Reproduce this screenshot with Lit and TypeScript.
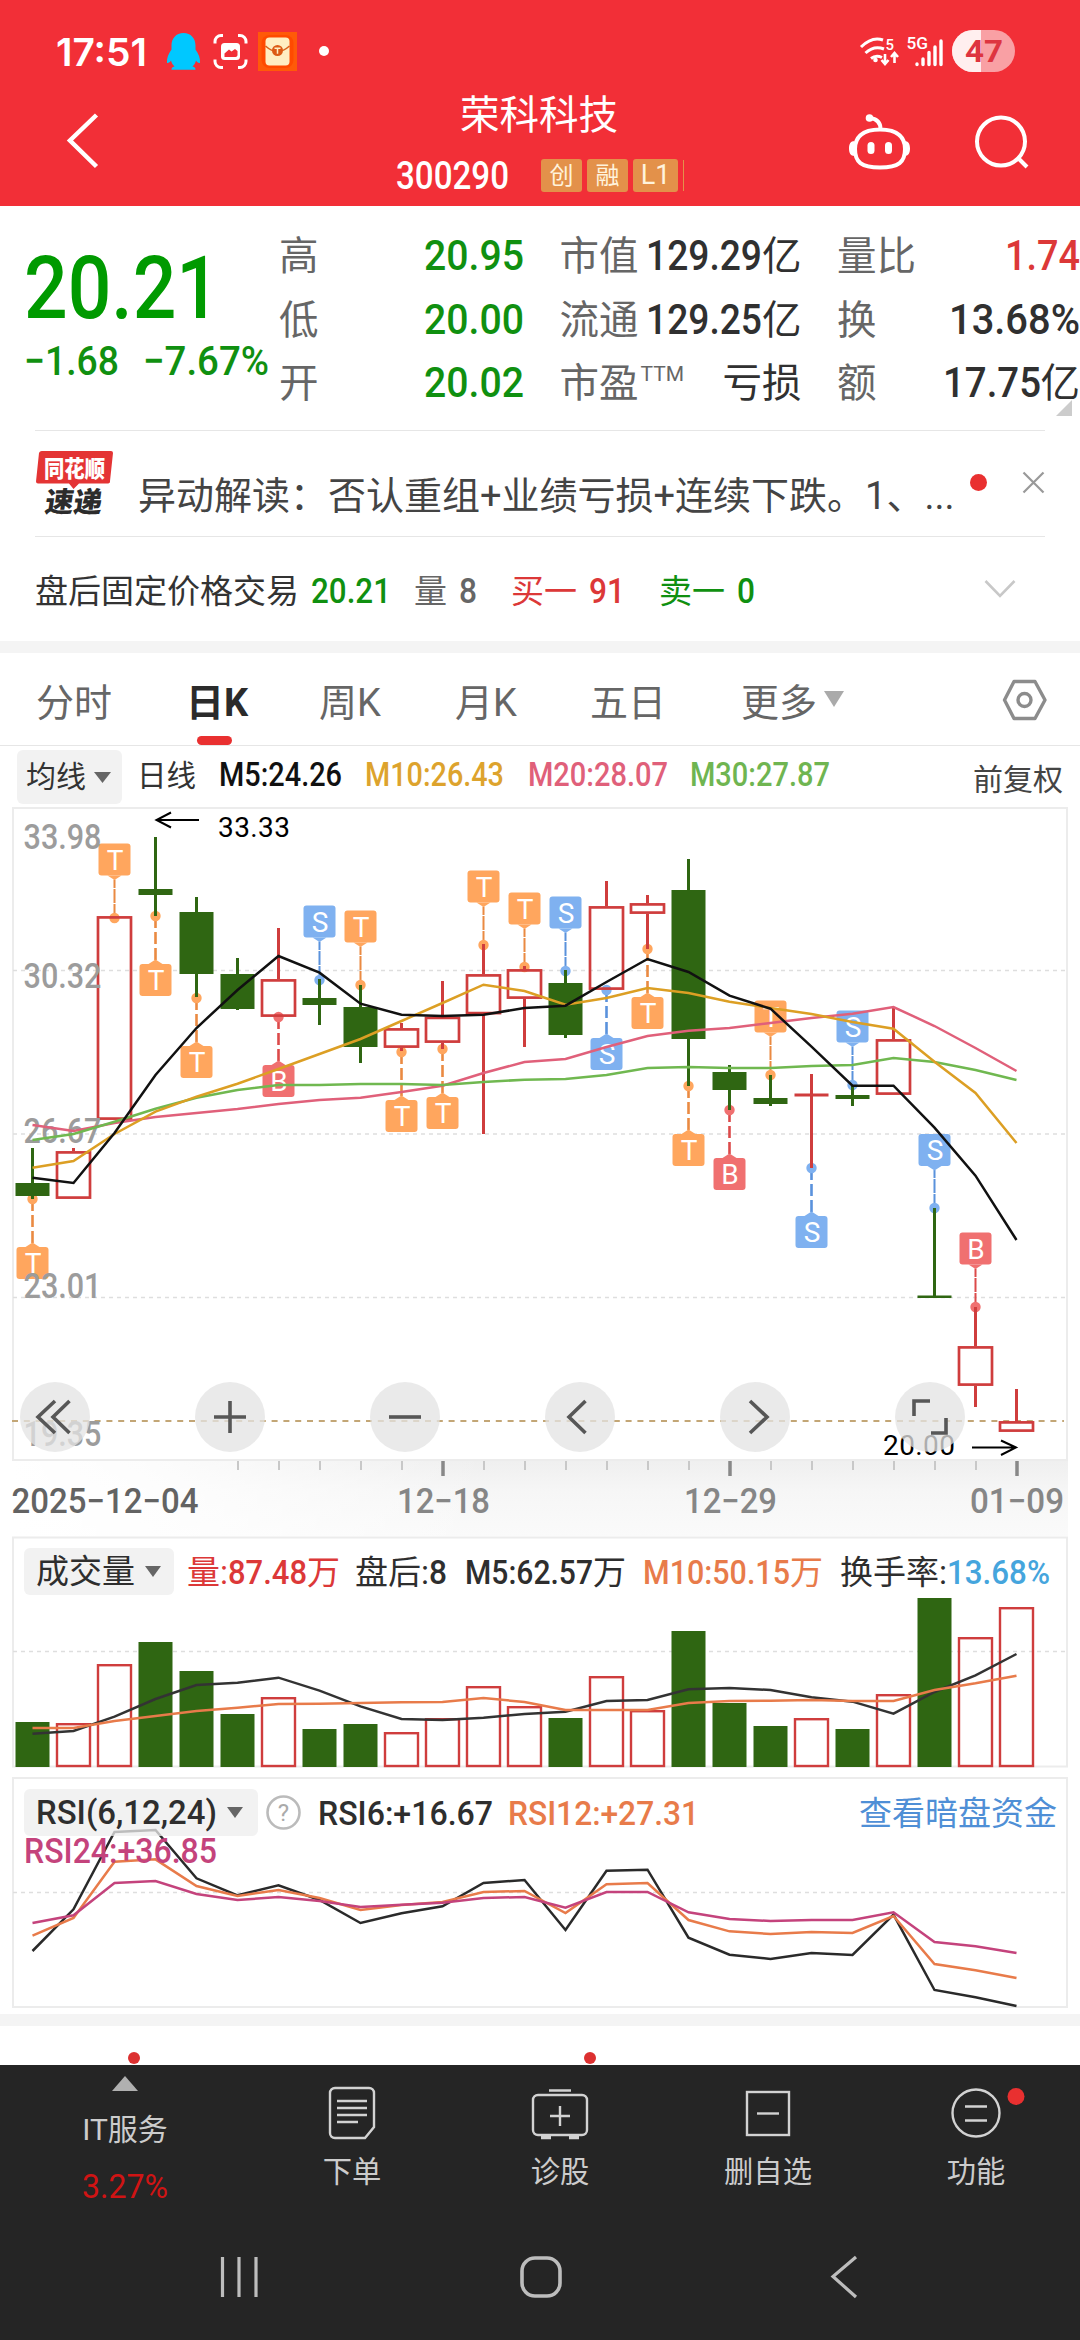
import { LitElement, html, svg, css } from "lit";
import { customElement, property } from "lit/decorators.js";

const fit = (text: string, width: number, cls = "") => html`<svg
  class="fit ${cls}" width=${width}><text x="0" y="0.72em" textLength=${width} lengthAdjust="spacingAndGlyphs">${text}</text></svg>`;

const GREEN = "#2f6612";
const RED = "#cf3d3d";
const STEP = 41;
const X0 = 32.5;
const cx = (i: number) => X0 + STEP * i;
const points = (ys: number[]) => ys.map((y, i) => `${cx(i)},${y}`).join(" ");

// direction, high, body top, body bottom, low
type Candle = ["u" | "d", number, number, number, number];
const candles: Candle[] = [
  ["d", 1148, 1183, 1196, 1199], ["u", 1148, 1151, 1199, 1199], ["u", 916, 916, 1120, 1120],
  ["d", 837, 889, 895, 916], ["d", 897, 912, 974, 997], ["d", 958, 974, 1009, 1010],
  ["u", 928, 979, 1017, 1017], ["d", 979, 998, 1005, 1025], ["d", 985, 1007, 1047, 1063],
  ["u", 1023, 1028, 1048, 1051], ["u", 981, 1016.5, 1043, 1049], ["u", 944, 974, 1014.5, 1134],
  ["u", 966, 969, 999, 1047], ["d", 970, 983, 1035, 1038], ["u", 881, 906, 990, 990],
  ["u", 895, 903, 914, 949], ["d", 859, 890, 1039, 1086], ["d", 1065, 1072, 1090, 1110],
  ["d", 1075, 1098, 1104, 1106], ["u", 1074, 1093.5, 1096.5, 1168], ["d", 1085, 1095, 1099, 1106],
  ["u", 1007, 1039, 1095, 1095], ["d", 1208, 1295.5, 1298, 1298], ["u", 1307, 1346, 1386, 1407],
  ["u", 1389, 1421, 1432, 1432],
];

// index, letter, box top, dot y
type Mark = [number, "T" | "S" | "B", number, number];
const marks: Mark[] = [
  [0, "T", 1247, 1199], [2, "T", 843.5, 918], [3, "T", 964, 916], [4, "T", 1046, 998], [6, "B", 1065, 1017],
  [7, "S", 905.5, 980], [8, "T", 910.5, 985], [9, "T", 1100, 1052], [10, "T", 1097, 1049],
  [11, "T", 870.5, 945], [12, "T", 892.5, 967], [13, "S", 896.5, 971], [14, "S", 1038, 990],
  [15, "T", 997, 949], [16, "T", 1134, 1086], [17, "B", 1158, 1110], [18, "T", 1000.5, 1075],
  [19, "S", 1216, 1168], [20, "S", 1010.5, 1085], [22, "S", 1134, 1208], [23, "B", 1232.5, 1307],
];
const markFill = { T: "#ffa65e", S: "#7fb1f0", B: "#f07070" };
const markLine = { T: "#ea8a42", S: "#5a92dc", B: "#dc4a4a" };

const averages: [string, number[]][] = [
  ["#e0607a", [1125, 1131, 1123, 1117, 1113, 1109, 1104, 1100, 1097.7, 1092, 1085.7, 1073, 1062, 1059, 1047, 1036, 1030.7, 1028, 1023, 1018, 1013.7, 1007, 1026, 1048, 1071]],
  ["#70b850", [1140, 1134, 1121.7, 1108.7, 1097.7, 1090, 1085, 1085, 1084, 1084, 1085, 1082, 1079.7, 1079, 1075, 1068, 1067, 1068, 1068, 1066, 1065, 1058, 1062, 1070, 1080]],
  ["#dc9f24", [1167.7, 1161, 1134, 1111.7, 1096.7, 1083.7, 1069, 1054, 1039, 1021, 1003, 984.7, 991, 1004.7, 998, 988, 993, 1001.7, 1008, 1014, 1022, 1028.7, 1061.7, 1093, 1143]],
  ["#111", [1177.7, 1183, 1133, 1075, 1028, 990, 956, 972.7, 1003.7, 1014.7, 1016, 1014.7, 1008, 1005.7, 982, 959, 972, 995.7, 1008.7, 1046.7, 1085.7, 1085.7, 1127.7, 1175.7, 1240]],
];

const priceLabels: [string, number][] = [["33.98", 849], ["30.32", 988], ["26.67", 1143], ["23.01", 1298], ["19.35", 1445.5]];

@customElement("kline-chart")
class KlineChart extends LitElement {
  static styles = css`
    :host { display: block; }
    svg { display: block; font-family: Roboto, "Noto Sans CJK SC", sans-serif; }
    .letter { font-size: 28px; fill: #fff; text-anchor: middle; }
    .axis { font-size: 35px; font-weight: 500; fill: #9c9c9c; }
    .ext { font-size: 28px; fill: #000; }
    .date { font-size: 35px; font-weight: 500; fill: #868686; }
    .date.first { fill: #636363; }
  `;

  private mark([i, letter, top, dot]: Mark) {
    const x = cx(i);
    const above = top < dot;
    const edge = above ? top + 36 : top - 4;
    const tri = above
      ? `${x - 7},${top + 32} ${x + 7},${top + 32} ${x},${top + 36.5}`
      : `${x - 7},${top} ${x + 7},${top} ${x},${top - 4.5}`;
    return svg`
      <line x1=${x} x2=${x} y1=${dot} y2=${edge} stroke=${markLine[letter]} stroke-width=${above ? 2 : 2.6}
        stroke-dasharray=${above ? "14 1" : "12 4"}/>
      <circle cx=${x} cy=${dot} r="5.2" fill=${markFill[letter]}/>
      <rect x=${x - 16} y=${top} width="32" height="32" rx="3" fill=${markFill[letter]}/>
      <polygon points=${tri} fill=${markFill[letter]}/>
      <text class="letter" x=${x + 0.5} y=${top + 26}>${letter}</text>`;
  }

  private candle([dir, hi, top, bot, lo]: Candle, i: number) {
    const x = cx(i);
    const h = bot - top;
    if (dir === "d" || h < 4) {
      const c = dir === "d" ? GREEN : RED;
      return svg`<line x1=${x} x2=${x} y1=${hi} y2=${lo} stroke=${c} stroke-width="3"/>
        <rect x=${x - 17} y=${top} width="34" height=${h} fill=${c}/>`;
    }
    return svg`<path d="M${x} ${hi}V${top}M${x} ${bot}V${lo}" stroke=${RED} stroke-width="3"/>
      <rect x=${x - 16.5} y=${top + 1.4} width="33" height=${h - 2.8} fill="none" stroke=${RED} stroke-width="2.7"/>`;
  }

  private tool(x: number, d: string) {
    return svg`<circle cx=${x} cy="1417" r="35" fill="rgb(228,228,228)" fill-opacity="0.76"/>
      <path d=${d} transform="translate(${x} 1417)" fill="none" stroke="#575757" stroke-width="3.6"/>`;
  }

  render() {
    return html`<svg width="1080" height="730" viewBox="0 806 1080 730">
      <defs>
        <linearGradient id="v" x1="0" y1="0" x2="0" y2="1">
          <stop offset="0" stop-color="#efefef"/><stop offset=".4" stop-color="#f6f6f6"/><stop offset="1" stop-color="#fafafa"/>
        </linearGradient>
        <linearGradient id="h" x1="0" y1="0" x2="1" y2="0">
          <stop offset="0" stop-color="#fff"/><stop offset=".12" stop-color="#fff" stop-opacity=".85"/>
          <stop offset=".45" stop-color="#fff" stop-opacity="0"/>
        </linearGradient>
      </defs>
      <rect x="12" y="1461" width="1056" height="75" fill="url(#v)"/>
      <rect x="12" y="1461" width="1056" height="75" fill="url(#h)"/>
      <rect x="13" y="808" width="1054" height="652" fill="#fff" stroke="#ececec" stroke-width="2"/>
      <path d="M13 970.5H1066M13 1134H1066M13 1297.5H1066" stroke="#dedede" stroke-width="1.4" stroke-dasharray="4 4"/>
      <path d="M12 1421H1064" stroke="#c3a676" stroke-width="1.8" stroke-dasharray="6 5.8"/>
      ${marks.map((m) => this.mark(m))}
      ${candles.map((c, i) => this.candle(c, i))}
      ${priceLabels.map(([t, y]) => svg`<text class="axis" x="23.5" y=${y} textLength="78" lengthAdjust="spacingAndGlyphs">${t}</text>`)}
      ${averages.map(([c, ys]) => svg`<polyline points=${points(ys)} fill="none" stroke=${c} stroke-width="2.5"/>`)}
      <path d="M199 820H157M171 812.5L156.500 820L171 827.500" fill="none" stroke="#000" stroke-width="2"/>
      <text class="ext" x="218" y="837" textLength="72">33.33</text>
      <path d="M972 1447.500H1015M1001 1440.500L1016 1447.500L1001 1455" fill="none" stroke="#000" stroke-width="2"/>
      <text class="ext" x="883" y="1455" textLength="72">20.00</text>
      ${this.tool(55, "M0 -16L-17 0L0 16M14.500 -16L-2 0L14.500 16")}
      ${this.tool(230, "M-16 0H16M0 -16V16")}
      ${this.tool(405, "M-16 0H16")}
      ${this.tool(580, "M5.500 -16L-11 0L5.500 16")}
      ${this.tool(755, "M-5 -16L12 0L-5 16")}
      ${this.tool(930, "M0 -16H-16V-1M1 16H16V1")}
      ${Array.from({ length: 20 }, (_, k) => k + 5).map((i) => {
        const major = i === 10 || i === 17 || i === 24;
        return svg`<line x1=${cx(i) + 0.5} x2=${cx(i) + 0.5} y1="1461" y2=${major ? 1476 : 1470}
          stroke=${major ? "#888" : "#c8c8c8"} stroke-width=${major ? 3.5 : 2}/>`;
      })}
      <text class="date first" x="11.500" y="1513" textLength="187" lengthAdjust="spacingAndGlyphs">2025−12−04</text>
      <text class="date" x="397" y="1513" textLength="93" lengthAdjust="spacingAndGlyphs">12−18</text>
      <text class="date" x="684" y="1513" textLength="93" lengthAdjust="spacingAndGlyphs">12−29</text>
      <text class="date" x="970" y="1513" textLength="94" lengthAdjust="spacingAndGlyphs">01−09</text>
    </svg>`;
  }
}

const volDirs = "duudddudduuuuduudddududuu";
const volTops = [1722, 1723, 1664, 1642, 1671, 1714, 1697, 1729, 1724, 1732, 1718, 1686, 1706, 1718, 1676, 1710, 1631, 1703, 1726, 1718, 1729, 1694, 1598, 1637, 1607];
const scaled = (base: number, ys: number[]) => ys.map((y) => base + y / 3);
const volM5 = scaled(1530, [611, 603, 560, 507, 465, 458, 443, 482, 529, 567, 570, 563, 552, 545, 513, 510, 478, 474, 480, 502, 515, 551, 486, 436, 372]);
const volM10 = scaled(1530, [594, 594, 573, 558, 543, 533, 522, 521, 519, 517, 516, 504, 516, 540, 540, 540, 519, 513, 512, 510, 513, 513, 480, 460, 437]);
const rsi6 = scaled(1770, [543, 418, 186, 180, 325, 376, 346, 390, 459, 430, 409, 339, 330, 480, 302, 299, 503, 554, 567, 549, 555, 434, 660, 682, 708]);
const rsi12 = scaled(1770, [497, 444, 275, 268, 348, 378, 360, 384, 420, 405, 396, 366, 363, 429, 343, 339, 450, 484, 492, 486, 489, 438, 582, 601, 624]);
const rsi24 = scaled(1770, [459, 436, 339, 333, 372, 390, 381, 393, 411, 404, 398, 384, 381, 413, 366, 366, 427, 447, 453, 450, 450, 427, 516, 529, 549]);

const poly = (ys: number[], color: string) => svg`<polyline points=${points(ys)} fill="none" stroke=${color} stroke-width="2.5"/>`;

@customElement("sub-chart")
class SubChart extends LitElement {
  @property() kind = "volume";
  static styles = css`:host { display: block; } svg { display: block; }`;

  render() {
    if (this.kind === "rsi")
      return html`<svg width="1080" height="238" viewBox="0 1770 1080 238">
        <rect x="13" y="1778" width="1054" height="229" fill="none" stroke="#ececec" stroke-width="2"/>
        <path d="M13 1892.500H1066" stroke="#dedede" stroke-width="1.4" stroke-dasharray="4 4"/>
        ${poly(rsi6, "#2a2a2a")}${poly(rsi12, "#e87b4a")}${poly(rsi24, "#c4437c")}
      </svg>`;
    return html`<svg width="1080" height="234" viewBox="0 1536 1080 234">
      <rect x="13" y="1537.500" width="1054" height="229" fill="#fff" stroke="#ececec" stroke-width="2"/>
      <path d="M13 1651.500H1066" stroke="#dedede" stroke-width="1.4" stroke-dasharray="4 4"/>
      ${volTops.map((y, i) => volDirs[i] === "d"
        ? svg`<rect x=${cx(i) - 17} y=${y} width="34" height=${1767 - y} fill=${GREEN}/>`
        : svg`<rect x=${cx(i) - 16.5} y=${y + 1.2} width="33" height=${1766 - y - 1.2} fill="none" stroke=${RED} stroke-width="2.4"/>`)}
      ${poly(volM5, "#333")}${poly(volM10, "#e87b4a")}
    </svg>`;
  }
}

const icon = {
  order: svg`<path d="M7 2H41a5 5 0 0 1 5 5V41L37 52H7a5 5 0 0 1-5-5V7a5 5 0 0 1 5-5Z"/><path d="M9 15H39M9 22H39M9 29H39M9 36H30"/>`,
  diagnose: svg`<rect x="-3" y="9" width="54" height="40" rx="5"/><path d="M13 4.500H35M24 20V40M14 30H34"/><path d="M5 51.500H15M33 51.500H43" stroke-width="3.500"/>`,
  remove: svg`<rect x="3" y="6" width="42" height="43"/><path d="M13 27.500H35"/>`,
  more: svg`<circle cx="24" cy="27" r="23.500"/><path d="M13 20.500H35M13 34.500H35"/>`,
};

@customElement("app-root")
class AppRoot extends LitElement {
  static styles = css`
    :host { display: block; width: 1080px; height: 2340px; overflow: hidden; background: #fff; color: #333;
      font-family: Roboto, "Noto Sans CJK SC", sans-serif; white-space: nowrap; }
    * { box-sizing: border-box; }
    svg { display: block; flex: none; overflow: visible; }
    .fit { display: inline-block; height: .72em; vertical-align: baseline; fill: currentColor; font-weight: 500; }
    .reg { font-weight: 400; }
    .red { color: #dc3838; }
    .green { color: #109010; }
    .gray { color: #666; }

    header { height: 206px; background: #f22f37; color: #fff; }
    .status { height: 92px; padding: 11px 65px 0 56px; display: flex; justify-content: space-between; }
    .clock { display: flex; align-items: center; height: 82px; gap: 19px; }
    .time { font: 600 38px/80px Inter, sans-serif; }
    .time .fit { font-weight: 600; }
    .nav { display: grid; grid-template-columns: 397px 1fr 271px; height: 114px; }
    .title { font-size: 39.5px; line-height: 48px; padding-left: 63px; }
    .code { display: flex; align-items: center; height: 36px; margin: 17px 0 0 -1px; padding-top: 1px; font-size: 38px; }
    .code .fit { margin-right: 32px; }
    .tag { height: 33px; width: 41px; border-radius: 3px; background: #e3914a; color: #fff3dc; font-size: 24px;
      line-height: 34px; text-align: center; margin-right: 5px; }
    .tag.wide { width: 45px; font-size: 27px; line-height: 33px; }
    .sliver { width: 1px; height: 31px; background: #e3914a; }

    .quote { display: flex; height: 224px; padding-top: 19px; }
    .last { width: 279px; padding-left: 24px; padding-top: 30px; color: #009a00; }
    .last .price { font-size: 87.5px; display: block; }
    .delta { display: flex; gap: 24px; margin-top: 27px; font-size: 41px; color: #109010; }
    .stats { display: grid; grid-template-columns: 245px 242px 243px; column-gap: 35.5px; grid-auto-rows: 63.5px; }
    .stat { display: flex; justify-content: space-between; align-items: baseline; line-height: 63px; font-size: 39.5px; color: #303030; }
    .stat .fit { font-size: 43px; }
    .stat.green { color: #109010; }
    .stat.red { color: #dc3838; }
    .label { color: #666; }
    .label sup { font-size: 21px; line-height: 0; vertical-align: 16px; margin-left: 2px; }
    .corner { position: absolute; left: 1056px; top: 400px; }

    .divider { height: 1px; margin: 0 35px; background: #e6e6e6; }
    .news { height: 105px; display: grid; grid-template-columns: 102px 832px 52px 1fr; padding-left: 36px; color: #444; }
    .brand { font-weight: 900; }
    .brand text { font-family: "Noto Sans CJK SC", sans-serif; font-weight: 900; }
    .headline { font-size: 38px; line-height: 131px; height: 105px; overflow: hidden; text-overflow: ellipsis; }
    .after { height: 104px; display: flex; align-items: baseline; line-height: 110px; padding-left: 35px; font-size: 33px; }
    .after .fit { font-size: 35px; }
    .gap1 { margin-left: 12px; } .gap2 { margin-left: 23px; } .gap3 { margin-left: 34px; }
    .expand { margin-left: 229px; align-self: center; }
    .band { height: 12px; background: #f4f4f4; }

    .tabs { height: 93px; display: grid; grid-template-columns: 150px 133px 136px 135px 151px 262px 1fr; padding-left: 36px;
      font-size: 38px; line-height: 101px; color: #666; border-bottom: 1px solid #e6e6e6; }
    .tab { display: flex; }
    .tab.on { color: #2b2b2b; font-weight: 700; display: block; }
    .bar { width: 35px; height: 9px; border-radius: 5px; background: #e93030; margin: -18px 0 0 11px; }

    .mas { height: 60px; padding: 4px 0 0 17px; display: grid; grid-template-columns: 120px 82px 146px 163px 162px 283px 1fr;
      font-size: 29.5px; line-height: 52px; align-items: start; }
    .mas .fit { font-size: 32.5px; }
    .pill { background: #f2f2f2; border-radius: 6px; display: flex; align-items: center; }
    .mas .pill { width: 105px; height: 54px; padding-left: 9px; gap: 8px; font-size: 30px; line-height: 58px; }
    .last-cell { line-height: 60px; color: #444; font-size: 30px; }
    .m5 { color: #111; } .m10 { color: #dda32d; } .m20 { color: #e0607a; } .m30 { color: #6fb551; }

    .panel { display: grid; }
    .panel > * { grid-area: 1 / 1; }
    .legend { display: grid; font-size: 33px; line-height: 50px; height: 48px; color: #2e2e2e; align-items: start; }
    .legend .fit { font-size: 34px; }
    .vol { padding-left: 24px; margin-top: 12px; grid-template-columns: 163px 168px 110px 178px 197px 1fr; }
    .legend .pill { height: 47px; padding-left: 12px; background: rgba(238, 238, 238, .75); }
    .vol .pill { width: 150px; gap: 10px; }
    .rsi-box { margin-top: 19px; }
    .rsi { padding-left: 24px; grid-template-columns: 235px 59px 190px 351px 1fr; }
    .rsi .pill { width: 234px; gap: 10px; }
    .rsi24 { font-size: 34.5px; line-height: 47px; margin-top: -9px; padding-left: 24px; color: #c4437c; }
    .orange { color: #e87b4a; } .blue { color: #45a5dd; } .link { color: #4f8fd6; }
    .peek { height: 39px; }
    .band.low { margin-top: 6px; }

    .dock { background: #252525; height: 275px; color: #ccc; }
    .items { display: grid; grid-template-columns: 248px repeat(4, 208px); height: 167px; }
    .item { display: flex; flex-direction: column; align-items: center; font-size: 29.3px; padding-top: 21px; }
    .item span { line-height: 65px; }
    .item .glyph { stroke: #d2d2d2; stroke-width: 2.4; fill: none; }
    .item.sector { padding: 11px 0 0 2px; font-size: 30px; }
    .item.sector span { line-height: 77px; }
    .item .pct { color: #d01414; font-size: 34px; margin-top: -2px; }
    .keys { display: grid; grid-template-columns: 222px 298px 313px 1fr; padding-top: 24px; }
    .keys svg { stroke: #bdbdbd; fill: none; }
  `;

  private item(name: string, glyph: unknown, dot = false) {
    return html`<div class="item"><svg class="glyph" width="48" height="54">${glyph}
      ${dot ? svg`<circle cx="64" cy="10.500" r="8.500" fill="#e93030" stroke="none"/>` : ""}</svg><span>${name}</span></div>`;
  }

  private caret(w = 17, h = 11, c = "#666") {
    return html`<svg width=${w} height=${h}><polygon points="0,0 ${w},0 ${w / 2},${h}" fill=${c}/></svg>`;
  }

  render() {
    return html`
      <header>
        <div class="status">
          <div class="clock">
            <div class="time">${fit("17:51", 91)}</div>
            <svg width="160" height="40" viewBox="165 32 160 40">
              <path d="M182.500 33c-7.500 0-12 5.500-12 12.500v4c-3 4-5 9-4.500 13.500 1.500.5 3-1 4-2.500.5 2.500 2 4.500 3.500 6-2.500.5-3 1.500-3 3.300h24c0-1.800-.5-2.800-3-3.300 1.500-1.500 3-3.500 3.500-6 1 1.500 2.500 3 4 2.500.5-4.500-1.500-9.500-4.500-13.500v-4c0-7-4.500-12.500-12-12.500Z" fill="#00c8ff"/>
              <path d="M222 35.500h-2a6 6 0 0 0-6 6v2M237 35.500h2a6 6 0 0 1 6 6v2M214 59.500v2a6 6 0 0 0 6 6h2M245 59.500v2a6 6 0 0 1-6 6h-2" fill="none" stroke="#fff" stroke-width="3"/>
              <rect x="220" y="43" width="19" height="17" rx="3.500" fill="#fff"/>
              <path d="M223.500 57v-3.500l4.500-4 2.500 2 3.500-2.500 2.500 2V55c0 1-1 2-2 2Z" fill="#f22f37"/>
              <rect x="257" y="32" width="39" height="39" fill="#ff5a08"/>
              <rect x="260.500" y="35" width="32" height="33" rx="8" fill="#ff4a00"/>
              <rect x="264.500" y="37.500" width="24" height="28" rx="4" fill="#ffeec2"/>
              <path d="M264.500 46Q276.500 57 288.500 46" fill="none" stroke="#d8601a" stroke-width="1.500"/>
              <circle cx="276.500" cy="50.500" r="5.500" fill="#dc5a14"/>
              <path d="M273.500 48.300h6M276.500 48.300v5.500" stroke="#ffeec2" stroke-width="1.500"/>
              <circle cx="323" cy="51" r="5" fill="#fff"/>
            </svg>
          </div>
          <svg width="156" height="82" viewBox="859 11 156 82">
            <g fill="none" stroke="#fff" stroke-width="3">
              <path d="M861 47Q872 36 883 40M865.500 53Q874 45 884 49M871 58.500Q876 54.500 882 57.500"/>
              <path d="M885 54v9M881.500 60l3.500 4 3.500-4M894.500 63v-9M891 57l3.500-4 3.500 4" stroke-width="2.600"/>
            </g>
            <circle cx="875.500" cy="60" r="2.300" fill="#fff"/>
            <text x="885.500" y="50" font-size="15.500" font-weight="500" fill="#fff" textLength="8.500" lengthAdjust="spacingAndGlyphs">5</text>
            <text x="906.500" y="48.500" font-size="17" font-weight="500" fill="#fff" textLength="21.500" lengthAdjust="spacingAndGlyphs">5G</text>
            <path d="M917 64v.5M923 59v5.500M929 52.500v12M935 47v17.500M941 41v23.500" stroke="#fff" stroke-width="3.400" stroke-linecap="round"/>
            <rect x="952" y="30" width="63" height="42" rx="21" fill="#f9a0a4"/>
            <path d="M981 30h-8a21 21 0 0 0 0 42h8Z" fill="#ffefef"/>
            <text x="965" y="62" font-size="32" font-weight="700" fill="#de3440" textLength="38" lengthAdjust="spacingAndGlyphs">47</text>
          </svg>
        </div>
        <div class="nav">
          <svg width="110" height="90" viewBox="0 92 110 90"><path d="M96.500 115L70 140.500L96.500 166.500" fill="none" stroke="#fff" stroke-width="4.500"/></svg>
          <div>
            <div class="title">荣科科技</div>
            <div class="code">${fit("300290", 113)}<div class="tag">创</div><div class="tag">融</div><div class="tag wide">L1</div><div class="sliver"></div></div>
          </div>
          <svg width="271" height="90" viewBox="809 92 271 90">
            <g fill="none" stroke="#fff" stroke-width="4">
              <path d="M880 129.500c19 0 25 9 25 19.500 0 13-6 18.500-25 18.500s-25-5.500-25-18.500c0-10.500 6-19.500 25-19.500ZM880.500 129c0-7-4-10-10-11"/>
              <circle cx="1001" cy="141.500" r="24"/><path d="M1018 158L1027 167"/>
            </g>
            <circle cx="869.500" cy="118" r="3.800" fill="#fff"/>
            <path d="M854.500 141c-4 0-5.500 3-5.500 7.500s1.500 7.500 5.500 7.500ZM904.500 141c4 0 5.500 3 5.500 7.500s-1.500 7.500-5.500 7.500Z" fill="#fff"/>
            <rect x="867.500" y="142" width="7" height="12" rx="3.500" fill="#fff"/><rect x="885" y="142" width="7" height="12" rx="3.500" fill="#fff"/>
          </svg>
        </div>
      </header>

      <section class="quote">
        <div class="last">
          ${fit("20.21", 196, "price")}
          <div class="delta">${fit("−1.68", 95)}${fit("−7.67%", 126)}</div>
        </div>
        <div class="stats">
          <div class="stat green"><span class="label">高</span>${fit("20.95", 100)}</div>
          <div class="stat"><span class="label">市值</span><span>${fit("129.29", 116)}亿</span></div>
          <div class="stat red"><span class="label">量比</span>${fit("1.74", 75)}</div>
          <div class="stat green"><span class="label">低</span>${fit("20.00", 100)}</div>
          <div class="stat"><span class="label">流通</span><span>${fit("129.25", 116)}亿</span></div>
          <div class="stat"><span class="label">换</span>${fit("13.68%", 131)}</div>
          <div class="stat green"><span class="label">开</span>${fit("20.02", 100)}</div>
          <div class="stat"><span class="label">市盈<sup>TTM</sup></span><span>亏损</span></div>
          <div class="stat"><span class="label">额</span><span>${fit("17.75", 98)}亿</span></div>
        </div>
        <svg class="corner" width="16" height="16"><path d="M16 0V16H0Z" fill="#ccc"/></svg>
      </section>
      <div class="divider"></div>

      <section class="news">
        <svg class="brand" width="80" height="104" viewBox="36 431 80 104">
          <path d="M42 451H111a2 2 0 0 1 2 2L110 481a2 2 0 0 1-2 2.500H79L73.500 489L69 483.500H38a2 2 0 0 1-2-2L39 453a3 3 0 0 1 3-2Z" fill="#e43434"/>
          <text x="44" y="476.500" font-size="23" fill="#fff" textLength="61" lengthAdjust="spacingAndGlyphs">同花顺</text>
          <text x="0" y="0" font-size="28" fill="#2c2c2c" textLength="57" transform="translate(44 511.500) skewX(-8)" lengthAdjust="spacingAndGlyphs">速递</text>
        </svg>
        <div class="headline">异动解读：否认重组+业绩亏损+连续下跌。1、...</div>
        <svg width="20" height="104"><circle cx="8.500" cy="51.500" r="8.500" fill="#e93030"/></svg>
        <svg width="24" height="104"><path d="M1.500 41.500L21.500 61.500M21.500 41.500L1.500 61.500" stroke="#999" stroke-width="2.200"/></svg>
      </section>
      <div class="divider"></div>

      <section class="after">
        <span>盘后固定价格交易</span><span class="green gap1">${fit("20.21", 80)}</span>
        <span class="gray gap2">量</span><span class="gray gap1">${fit("8", 18)}</span>
        <span class="red gap3">买一</span><span class="red gap1">${fit("91", 36)}</span>
        <span class="green gap3">卖一</span><span class="green gap1">${fit("0", 18)}</span>
        <svg class="expand" width="32" height="18"><path d="M1.500 1L16 16L30.500 1" fill="none" stroke="#c8c8c8" stroke-width="2.600"/></svg>
      </section>
      <div class="band"></div>

      <nav class="tabs">
        <div class="tab">分时</div>
        <div class="tab on">日K<div class="bar"></div></div>
        <div class="tab">周K</div><div class="tab">月K</div><div class="tab">五日</div>
        <div class="tab">更多<svg width="28" height="60" style="margin-left:7px"><polygon points="0,38 20,38 10,54" fill="#aaa"/></svg></div>
        <svg width="44" height="92"><path d="M11 28.500H32L42 47L32 65.500H11L1.500 47Z" fill="none" stroke="#8c8c8c" stroke-width="3.400" stroke-linejoin="round"/>
          <circle cx="21.500" cy="47" r="6.500" fill="none" stroke="#8c8c8c" stroke-width="3.400"/></svg>
      </nav>

      <div class="mas">
        <div class="pill">均线${this.caret()}</div>
        <span>日线</span>
        <span class="m5">${fit("M5:24.26", 123)}</span><span class="m10">${fit("M10:26.43", 139)}</span>
        <span class="m20">${fit("M20:28.07", 140)}</span><span class="m30">${fit("M30:27.87", 140)}</span>
        <span class="last-cell">前复权</span>
      </div>

      <kline-chart></kline-chart>

      <div class="panel">
        <sub-chart kind="volume"></sub-chart>
        <div class="legend vol">
          <div class="pill">成交量${this.caret(16)}</div>
          <span class="red">量:${fit("87.48", 79)}万</span>
          <span>盘后:${fit("8", 18)}</span>
          <span>${fit("M5:62.57", 128)}万</span>
          <span class="orange">${fit("M10:50.15", 147)}万</span>
          <span>换手率:<span class="blue">${fit("13.68%", 103)}</span></span>
        </div>
      </div>

      <div class="panel">
        <sub-chart kind="rsi"></sub-chart>
        <div class="rsi-box">
          <div class="legend rsi">
            <div class="pill">${fit("RSI(6,12,24)", 181)}${this.caret(16)}</div>
            <svg width="50" height="47"><circle cx="24.500" cy="23.500" r="16" fill="none" stroke="#bbb" stroke-width="2.600"/>
              <text x="24.500" y="32" font-size="24" text-anchor="middle" fill="#aaa">?</text></svg>
            <span>${fit("RSI6:+16.67", 175)}</span>
            <span class="orange">${fit("RSI12:+27.31", 191)}</span>
            <span class="link">查看暗盘资金</span>
          </div>
          <div class="rsi24">${fit("RSI24:+36.85", 193)}</div>
        </div>
      </div>
      <div class="band low"></div>
      <svg class="peek" width="1080" height="39"><circle cx="134" cy="32" r="6" fill="#dc3030"/><circle cx="590" cy="32" r="6" fill="#dc3030"/></svg>

      <footer class="dock">
        <div class="items">
          <div class="item sector">
            <svg width="26" height="15"><polygon points="13,0 26,15 0,15" fill="#b0b0b0"/></svg>
            <span>IT服务</span>
            <div class="pct">${fit("3.27%", 86, "reg")}</div>
          </div>
          ${this.item("下单", icon.order)}${this.item("诊股", icon.diagnose)}
          ${this.item("删自选", icon.remove)}${this.item("功能", icon.more, true)}
        </div>
        <div class="keys"><span></span>
          <svg width="40" height="44"><path d="M0.500 1V41M17 1V41M34 1V41" stroke-width="3.200"/></svg>
          <svg width="44" height="44"><rect x="2" y="2" width="38" height="38" rx="13" stroke-width="3.600"/></svg>
          <svg width="30" height="44"><path d="M23 1L0 20.500L23 41" stroke-width="3.200"/></svg>
        </div>
      </footer>`;
  }
}
